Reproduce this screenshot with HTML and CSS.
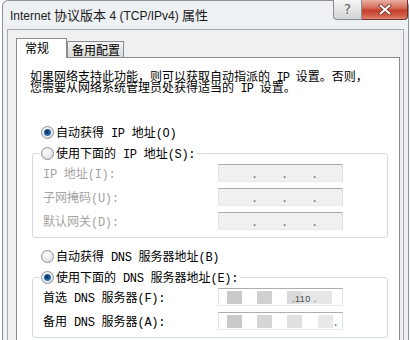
FILE: index.html
```html
<!DOCTYPE html>
<html lang="zh-CN">
<head>
<meta charset="utf-8">
<title>Internet 协议版本 4 (TCP/IPv4) 属性</title>
<link rel="stylesheet" href="styles.css">
</head>
<body>
<div class="window">
  <div class="titlebar">
    <div class="title">Internet <span class="tcj">协议版本</span> 4 (TCP/IPv4) <span class="tcj">属性</span></div>
    <div class="caption-btns">
      <div class="btn-help">?</div>
      <div class="btn-close">
        <svg width="14" height="11" viewBox="0 0 14 11">
          <path d="M2.5 1.5 L11.5 9.5 M11.5 1.5 L2.5 9.5" stroke="#6b2a20" stroke-width="3.6" stroke-linecap="round"/>
          <path d="M2.5 1.5 L11.5 9.5 M11.5 1.5 L2.5 9.5" stroke="#ffffff" stroke-width="2" stroke-linecap="round"/>
        </svg>
      </div>
    </div>
  </div>
  <div class="client">
    <div class="tabs">
      <div class="tab active">常规</div>
      <div class="tab">备用配置</div>
    </div>
    <div class="panel">
      <p class="desc"><span class="dl">如果网络支持此功能，则可以获取自动指派的<span class="m"> IP </span>设置。否则，</span><span class="dl">您需要从网络系统管理员处获得适当的<span class="m"> IP </span>设置。</span></p>

      <div class="opt opt-first"><span class="radio on"></span><span>自动获得<span class="m"> IP </span>地址<span class="m">(O)</span></span></div>

      <fieldset class="group">
        <legend class="opt"><span class="radio"></span><span>使用下面的<span class="m"> IP </span>地址<span class="m">(S):</span></span></legend>
        <div class="rows">
          <div class="row dis"><span class="lbl"><span class="m">IP </span>地址<span class="m">(I):</span></span><span class="ipbox off"><span class="dot">.</span><span class="dot">.</span><span class="dot">.</span></span></div>
          <div class="row dis"><span class="lbl">子网掩码<span class="m">(U):</span></span><span class="ipbox off"><span class="dot">.</span><span class="dot">.</span><span class="dot">.</span></span></div>
          <div class="row dis"><span class="lbl">默认网关<span class="m">(D):</span></span><span class="ipbox off"><span class="dot">.</span><span class="dot">.</span><span class="dot">.</span></span></div>
        </div>
      </fieldset>

      <div class="opt opt-dns"><span class="radio"></span><span>自动获得<span class="m"> DNS </span>服务器地址<span class="m">(B)</span></span></div>

      <fieldset class="group">
        <legend class="opt"><span class="radio on"></span><span>使用下面的<span class="m"> DNS </span>服务器地址<span class="m">(E):</span></span></legend>
        <div class="rows">
          <div class="row"><span class="lbl">首选<span class="m"> DNS </span>服务器<span class="m">(F):</span></span><span class="ipbox on"><span class="blk b1"></span><span class="blk b2"></span><span class="blk b3"></span><span class="blurtxt">.110 .</span></span></div>
          <div class="row"><span class="lbl">备用<span class="m"> DNS </span>服务器<span class="m">(A):</span></span><span class="ipbox on"><span class="blk b1"></span><span class="blk b2 c2"></span><span class="blk b4"></span><span class="blk b5"></span><span class="enddot">.</span></span></div>
        </div>
      </fieldset>
    </div>
  </div>
</div>
</body>
</html>
```
FILE: styles.css
```css
* { box-sizing: border-box; }
html, body { margin: 0; padding: 0; overflow: hidden; }
body {
  width: 410px;
  height: 340px;
  background: #ffffff;
  font-family: "Noto Sans CJK SC", sans-serif;
  font-size: 12px;
  color: #000;
}
.m {
  font-family: "Liberation Mono", "Noto Sans CJK SC", monospace;
  font-size: 12px;
  letter-spacing: -0.3px;
}
.window {
  margin-left: 2px;
  width: 407px;
  height: 360px;
  border: 1px solid #8d9198;
  border-bottom: none;
  border-radius: 6px 6px 0 0;
  background: #eef1f4;
}
.titlebar {
  height: 28px;
  display: flex;
  justify-content: space-between;
  align-items: flex-start;
}
.title {
  padding-left: 7px;
  line-height: 28px;
  font-family: "Liberation Sans", "Noto Sans CJK SC", sans-serif;
  font-size: 12px;
  color: #1a1a1a;
  white-space: nowrap;
}
.tcj { font-family: "Noto Sans CJK SC", sans-serif; font-size: 13px; }
.caption-btns {
  display: flex;
  margin-top: -1px;
}
.btn-help {
  width: 29px;
  height: 20px;
  border: 1px solid #8a8d93;
  border-top: none;
  border-radius: 0 0 0 4px;
  background: linear-gradient(#f6f6f6, #e4e4e4 50%, #d2d4d6);
  color: #5b5f66;
  font-family: "DejaVu Sans", sans-serif;
  font-size: 14px;
  line-height: 19px;
  text-align: center;
  text-shadow: 0 0 2px #fff;
}
.btn-close {
  width: 46px;
  height: 20px;
  border: 1px solid #6e3128;
  border-top: none;
  border-left: none;
  border-radius: 0 0 4px 0;
  background: linear-gradient(#eab0a3, #d66f5b 40%, #c5412d 55%, #d4614c 85%, #e08b78);
  display: flex;
  align-items: center;
  justify-content: center;
}
.client {
  margin: 0 4px;
  height: 340px;
  border: 1px solid #a7abb1;
  background: #f0f0f0;
  padding: 8px 3px 0 8px;
}
.tabs {
  display: flex;
  align-items: flex-end;
}
.tab {
  height: 16px;
  line-height: 15px;
  padding: 0 3px 0 4px;
  border: 1px solid #898c95;
  border-bottom: none;
  background: linear-gradient(#f5f5f5, #e5e5e5 50%, #dcdcdc);
  white-space: nowrap;
}
.tab.active {
  position: relative;
  z-index: 1;
  height: 20px;
  line-height: 18px;
  margin-bottom: -1px;
  padding: 0 17px 0 8px;
  background: #ffffff;
}
.panel {
  width: 384px;
  height: 300px;
  border: 1px solid #898c95;
  background: #ffffff;
  padding: 0 0 0 13px;
}
.desc {
  margin: 0;
  padding-top: 12px;
  display: flex;
  flex-direction: column;
  white-space: nowrap;
}
.dl { display: block; height: 11px; line-height: 11px; }
.desc .m { letter-spacing: -0.8px; }
.opt {
  display: flex;
  align-items: center;
  gap: 2px;
  height: 16px;
  white-space: nowrap;
}
.opt-first { margin-top: 32px; padding-left: 11px; }
.opt-dns { margin-top: 10px; padding-left: 11px; }
.radio {
  flex: none;
  width: 13px;
  height: 13px;
  border-radius: 50%;
  border: 1px solid #8f9296;
  background: radial-gradient(circle at 40% 35%, #ffffff 0, #eaeaea 50%, #cfd1d3 100%);
  display: flex;
  align-items: center;
  justify-content: center;
}
.radio.on::after {
  content: "";
  width: 7px;
  height: 7px;
  border-radius: 50%;
  background: radial-gradient(circle at 45% 40%, #0b2750 0, #1c5b98 45%, #67b1e6 100%);
}
.group {
  margin: 5px 0 0 2px;
  width: 356px;
  padding: 0 0 7px 0;
  border: 1px solid #d5dbe0;
  border-radius: 3px;
  min-width: 0;
}
.group legend {
  margin-left: 7px;
  padding: 0 2px 0 1px;
}
.rows {
  display: flex;
  flex-direction: column;
  gap: 6px;
  padding-top: 3px;
}
.row {
  display: grid;
  grid-template-columns: 175px 125px;
  align-items: center;
  height: 18px;
  padding-left: 10px;
  white-space: nowrap;
}
.row.dis { color: #a3a3a3; }
.ipbox {
  height: 18px;
  border: 1px solid;
  border-color: #abadb3 #dbdfe6 #e3e9ef #e2e3ea;
  display: flex;
  align-items: center;
}
.ipbox.off {
  background: #f0f0f0;
  padding-left: 34px;
  gap: 27px;
}
.ipbox.off .dot {
  width: 3px;
  color: #5d5d5d;
  line-height: 14px;
  font-size: 12px;
}
.ipbox.on {
  background: #ffffff;
  padding-left: 8px;
}
.blk {
  display: block;
  height: 13px;
  flex: none;
}
.b1 { width: 15px; background: #cacaca; }
.b2 { width: 15px; margin-left: 15px; background: #d0d0d0; }
.b2.c2 { background: #d6d6d6; }
.b3 {
  width: 45px;
  margin-left: 15px;
  background: linear-gradient(90deg, #dadada 0, #dadada 33%, #e6e6e6 34%, #e6e6e6 100%);
}
.blurtxt {
  margin-left: -40px;
  font-family: "Liberation Sans", sans-serif;
  font-size: 9px;
  line-height: 12px;
  padding-top: 3px;
  color: #4a4a4a;
  letter-spacing: 0.5px;
}
.b4 { width: 15px; margin-left: 15px; background: #e0e0e0; }
.b5 { width: 15px; margin-left: 16px; background: #e8e8e8; }
.enddot { color: #666; font-size: 12px; line-height: 12px; margin-left: 1px; }
```
